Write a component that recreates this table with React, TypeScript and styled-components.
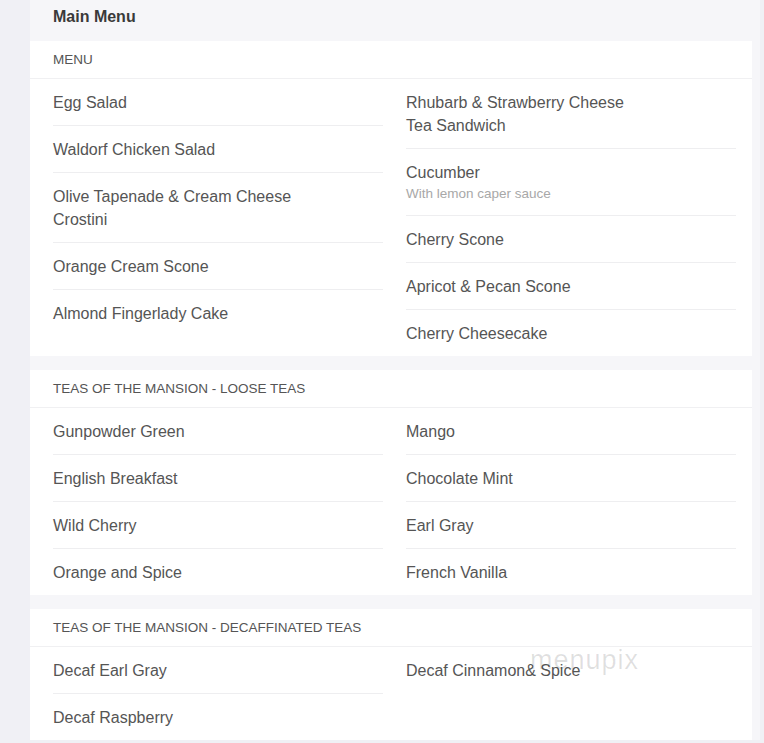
import styled, { createGlobalStyle } from "styled-components";

interface MenuItem {
  name: string;
  note?: string;
}
interface SectionData {
  title: string;
  left: MenuItem[];
  right: MenuItem[];
}

const sections: SectionData[] = [
  {
    title: "Menu",
    left: [
      { name: "Egg Salad" },
      { name: "Waldorf Chicken Salad" },
      { name: "Olive Tapenade & Cream Cheese Crostini" },
      { name: "Orange Cream Scone" },
      { name: "Almond Fingerlady Cake" },
    ],
    right: [
      { name: "Rhubarb & Strawberry Cheese Tea Sandwich" },
      { name: "Cucumber", note: "With lemon caper sauce" },
      { name: "Cherry Scone" },
      { name: "Apricot & Pecan Scone" },
      { name: "Cherry Cheesecake" },
    ],
  },
  {
    title: "Teas of the Mansion - Loose Teas",
    left: [
      { name: "Gunpowder Green" },
      { name: "English Breakfast" },
      { name: "Wild Cherry" },
      { name: "Orange and Spice" },
    ],
    right: [
      { name: "Mango" },
      { name: "Chocolate Mint" },
      { name: "Earl Gray" },
      { name: "French Vanilla" },
    ],
  },
  {
    title: "Teas of the Mansion - Decaffinated Teas",
    left: [{ name: "Decaf Earl Gray" }, { name: "Decaf Raspberry" }],
    right: [{ name: "Decaf Cinnamon& Spice" }],
  },
];

const GlobalStyle = createGlobalStyle`
  body {
    margin: 0;
    background: #f0f0f5;
    font-family: "Liberation Sans", Arial, sans-serif;
  }
`;

const Page = styled.div`
  padding-left: 30px;
  width: 730px;
`;

const Panel = styled.div`
  background: #f6f6f9;
  padding-right: 8px;
`;

const Title = styled.h1`
  margin: 0;
  height: 41px;
  box-sizing: border-box;
  padding: 6px 23px 0;
  font-size: 16px;
  line-height: 21px;
  font-weight: bold;
  color: #3a3a3a;
`;

const Card = styled.section`
  position: relative;
  background: #fff;
  margin-bottom: 14px;
`;

const CardHeader = styled.h2`
  margin: 0;
  height: 38px;
  box-sizing: border-box;
  display: flex;
  align-items: center;
  padding: 0 23px;
  border-bottom: 1px solid #f0f0f2;
  font-size: 13.5px;
  font-weight: normal;
  text-transform: uppercase;
  color: #555;
`;

const Columns = styled.div`
  display: grid;
  grid-template-columns: 330px 330px;
  column-gap: 23px;
  padding: 0 16px 0 23px;
  align-items: start;
`;

const List = styled.ul`
  list-style: none;
  margin: 0;
  padding: 0;
`;

const Item = styled.li`
  padding: 12px 0 11px;
  border-bottom: 1px solid #eeeef0;
  font-size: 16px;
  line-height: 23px;
  color: #555;
  &:last-child {
    border-bottom: none;
  }
`;

const Name = styled.div<{ $narrow: boolean }>`
  max-width: ${(p) => (p.$narrow ? "240px" : "none")};
`;

const Note = styled.div`
  font-size: 13.5px;
  line-height: 20px;
  color: #a8a8a8;
`;

const Watermark = styled.div`
  position: absolute;
  left: 500px;
  top: 36px;
  font-size: 27px;
  font-weight: 300;
  letter-spacing: 1px;
  color: rgba(0, 0, 0, 0.12);
  pointer-events: none;
`;

const Column = ({ items }: { items: MenuItem[] }) => (
  <List>
    {items.map((item) => (
      <Item key={item.name}>
        <Name $narrow={item.name.length > 30}>{item.name}</Name>
        {item.note && <Note>{item.note}</Note>}
      </Item>
    ))}
  </List>
);

export default function App() {
  return (
    <>
      <GlobalStyle />
      <Page>
        <Panel>
          <Title>Main Menu</Title>
          {sections.map((section, i) => (
            <Card key={section.title}>
              <CardHeader>{section.title}</CardHeader>
              <Columns>
                <Column items={section.left} />
                <Column items={section.right} />
              </Columns>
              {i === sections.length - 1 && <Watermark>menupix</Watermark>}
            </Card>
          ))}
        </Panel>
      </Page>
    </>
  );
}
